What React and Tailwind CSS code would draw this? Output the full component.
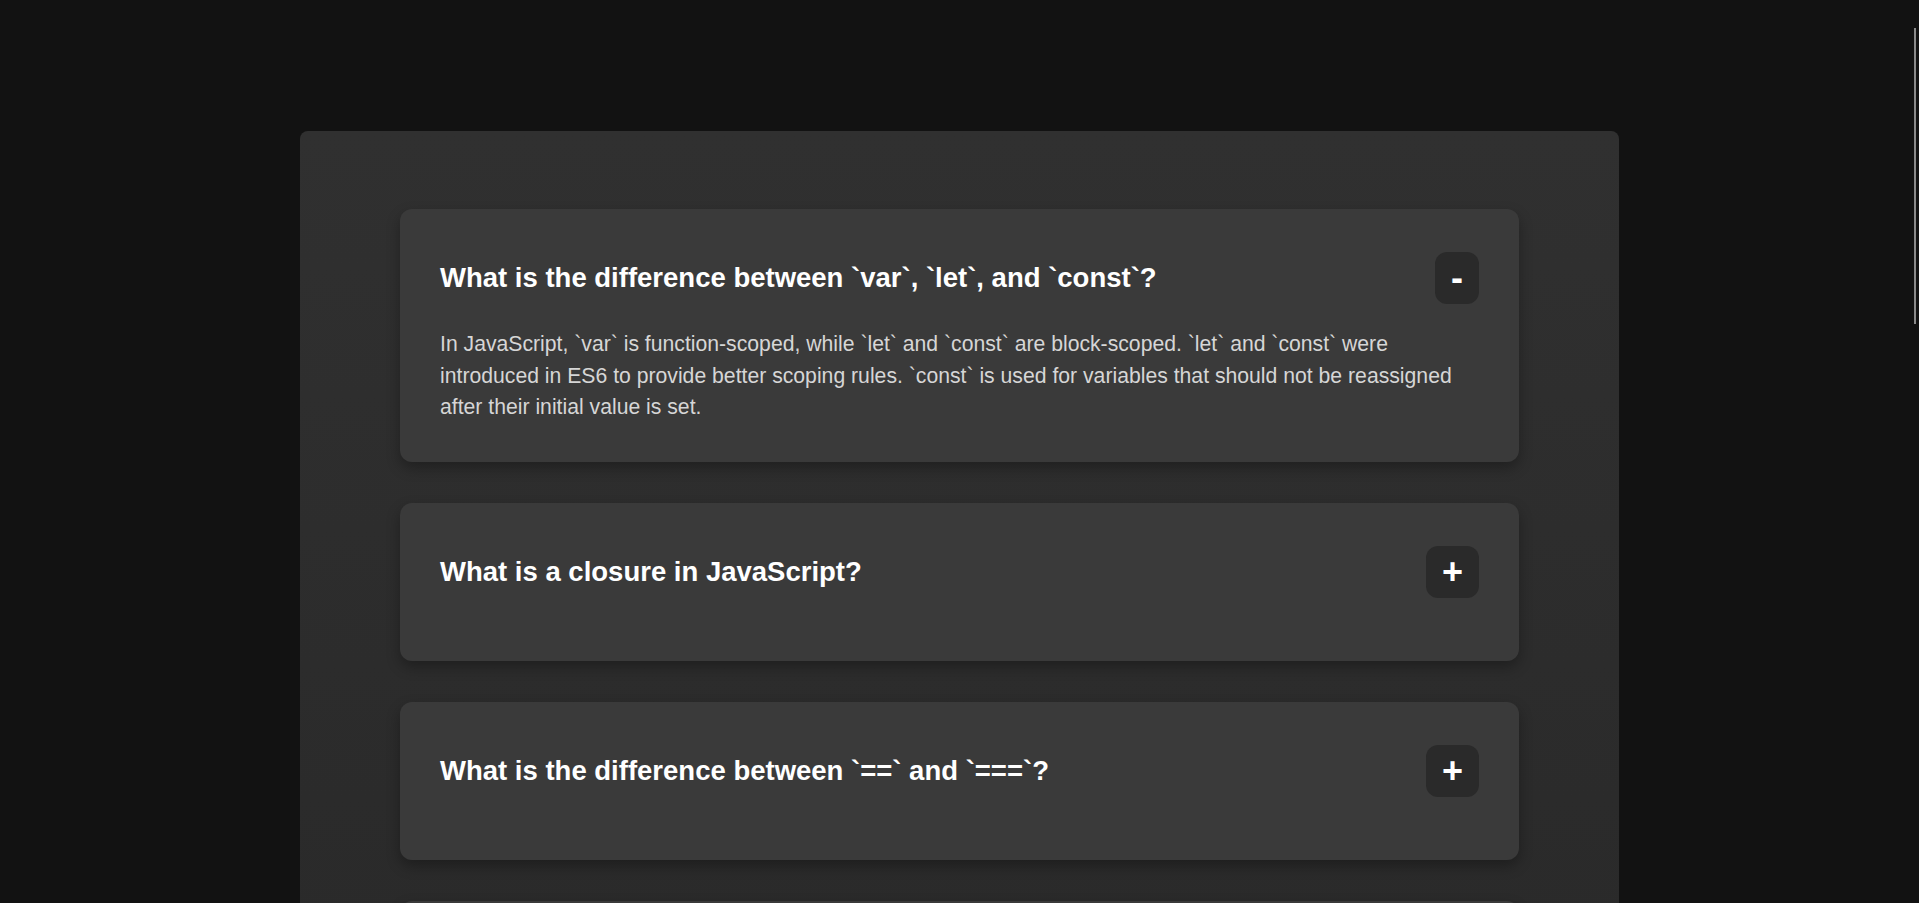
import React, { useState } from "react";

const faqs = [
  {
    q: "What is the difference between `var`, `let`, and `const`?",
    a: "In JavaScript, `var` is function-scoped, while `let` and `const` are block-scoped. `let` and `const` were introduced in ES6 to provide better scoping rules. `const` is used for variables that should not be reassigned after their initial value is set.",
  },
  {
    q: "What is a closure in JavaScript?",
    a: "A closure is a function that remembers the variables from the scope in which it was created, even after that outer function has returned.",
  },
  {
    q: "What is the difference between `==` and `===`?",
    a: "`==` compares values after type coercion, while `===` compares both the value and the type without any conversion.",
  },
  {
    q: "What is event delegation?",
    a: "Event delegation attaches a single listener to a parent element and handles events from its children as they bubble up.",
  },
  {
    q: "What are Promises in JavaScript?",
    a: "A Promise represents a value that may be available now, later, or never, and lets you chain async work with then and catch.",
  },
];

function FaqItem({ item, open, onToggle }) {
  return (
    <div className="rounded-xl bg-[#3a3a3a] px-10 pt-[43px] pb-[39px] shadow-[0_6px_14px_rgba(0,0,0,0.3)]">
      <div className="flex items-center justify-between gap-6">
        <h2 className="text-[27.5px] font-bold leading-[34px] text-white">{item.q}</h2>
        <button
          type="button"
          onClick={onToggle}
          className="shrink-0 rounded-xl bg-[#2a2a2a] px-4 py-1.5 text-[36px] font-bold leading-[40px] text-white cursor-pointer"
        >
          {open ? "-" : "+"}
        </button>
      </div>
      {/* answer keeps its margin when collapsed */}
      <div className={`mt-[24px] overflow-hidden ${open ? "max-h-96" : "max-h-0"}`}>
        <p className="text-[21.2px] leading-[31.7px] text-[#d6d6d6]">{item.a}</p>
      </div>
    </div>
  );
}

export default function App() {
  const [openIndex, setOpenIndex] = useState(0);

  return (
    <div className="relative h-screen overflow-hidden bg-[#121212] font-['Liberation_Sans',Arial,sans-serif]">
      <div className="mx-auto mt-[131px] flex w-[1319px] flex-col gap-[41px] rounded-lg bg-linear-to-b from-[#303030] to-[#272727] px-[100px] pt-[78px] pb-20">
        {faqs.map((item, i) => (
          <FaqItem
            key={i}
            item={item}
            open={openIndex === i}
            onToggle={() => setOpenIndex(openIndex === i ? -1 : i)}
          />
        ))}
      </div>

      {/* thin overlay scrollbar */}
      <div className="absolute right-[3px] top-[28px] h-[296px] w-[2px] bg-[#8a8a8a]" />
    </div>
  );
}
